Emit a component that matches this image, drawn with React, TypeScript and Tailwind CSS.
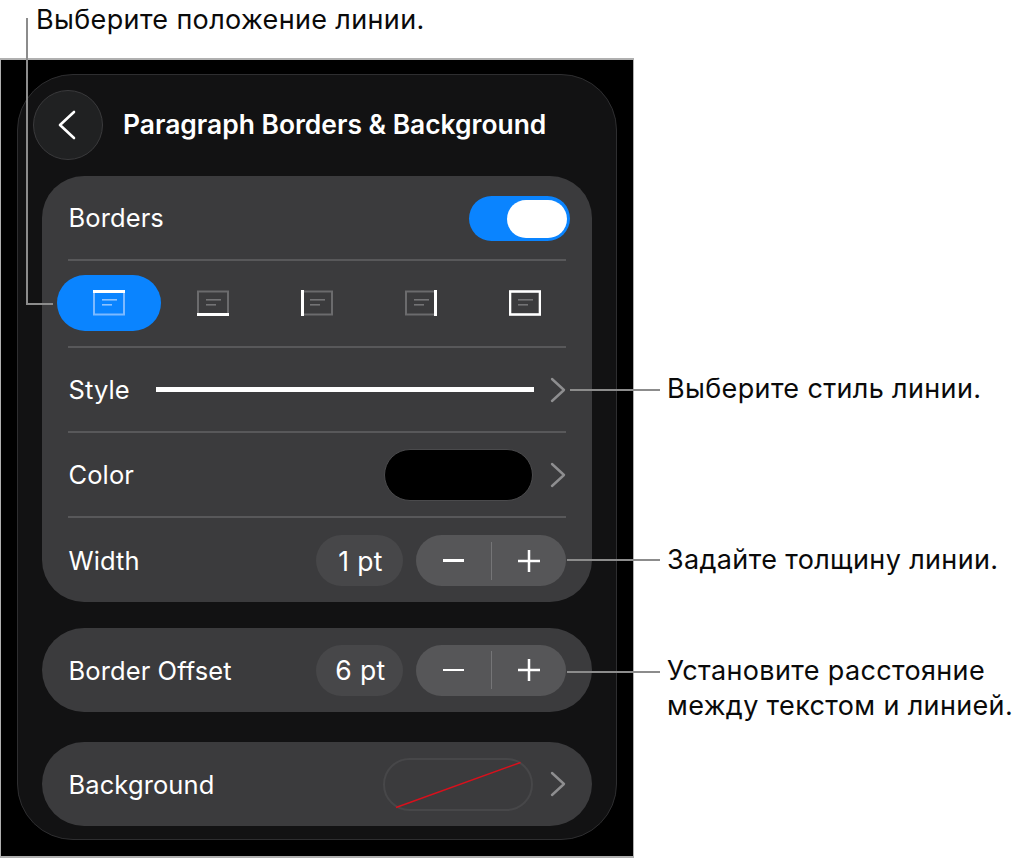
const FONT = "font-['Inter','Noto_Sans',sans-serif]";

function Chevron({ className = "" }: { className?: string }) {
  return (
    <svg width="16" height="26" viewBox="0 0 16 26" fill="none" className={className}>
      <path d="M2 2 L14 13 L2 24" stroke="#8e8e90" strokeWidth="2.4" strokeLinecap="round" strokeLinejoin="round" />
    </svg>
  );
}

function BorderIcon({ side, selected = false }: { side: "top" | "bottom" | "left" | "right" | "all"; selected?: boolean }) {
  const base = selected ? "#7cb9ff" : "#6b6b6d";
  const w = "#ffffff";
  const text = selected ? "#8cc2ff" : "#737375";
  return (
    <svg width="32" height="26" viewBox="0 0 32 26" fill="none">
      <rect x="1" y="1.5" width="30" height="23" stroke={side === "all" ? w : base} strokeWidth={side === "all" ? 2.6 : 2} />
      {side === "top" && <rect x="0" y="0" width="32" height="3" fill={w} />}
      {side === "bottom" && <rect x="0" y="23" width="32" height="3" fill={w} />}
      {side === "left" && <rect x="0" y="0" width="3" height="26" fill={w} />}
      {side === "right" && <rect x="29" y="0" width="3" height="26" fill={w} />}
      <rect x="9" y="9" width="15" height="1.6" fill={text} />
      <rect x="9" y="14" width="10" height="1.6" fill={text} />
    </svg>
  );
}

function Stepper() {
  return (
    <div className="flex h-[51px] w-[150px] items-center rounded-full bg-[#565658]">
      <div className="flex flex-1 items-center justify-center">
        <div className="h-[2.5px] w-[21px] bg-white" />
      </div>
      <div className="h-[38px] w-px bg-[#757577]" />
      <div className="flex flex-1 items-center justify-center">
        <svg width="22" height="22" viewBox="0 0 22 22">
          <path d="M0 11 H22 M11 0 V22" stroke="#fff" strokeWidth="2.5" />
        </svg>
      </div>
    </div>
  );
}

function Value({ children }: { children: string }) {
  return (
    <div className="flex h-[51px] w-[87px] items-center justify-center rounded-full bg-[#474749] pt-[2px] pl-[2px] text-[26.5px] tracking-[0.4px] text-white">
      {children}
    </div>
  );
}

function Sep() {
  return <div className="ml-[26px] mr-[26px] h-[2px] bg-[#58585a]" />;
}

function Label({ children, className = "" }: { children: string; className?: string }) {
  return <span className={`ml-[-0.5px] pt-[2px] tracking-[0.1px] ${className}`}>{children}</span>;
}

function Callout({ className, children }: { className: string; children: React.ReactNode }) {
  return <div className={`absolute text-[27px] tracking-[0.35px] text-[#0a0a0a] ${className}`}>{children}</div>;
}

function Leader({ className }: { className: string }) {
  return <div className={`absolute bg-[#8c8c8c] ${className}`} />;
}

export default function App() {
  return (
    <div className={`relative h-[860px] w-[1028px] overflow-hidden bg-white pt-[58px] ${FONT}`}>
      <div className="h-[800px] w-[634px] border-2 border-x-[1px] border-[#b0b0b0] bg-black pt-[14px] pl-[16px]">
        <div className="h-[766px] w-[600px] rounded-[56px] border border-[#2e2e30] bg-[#121213] pl-[24px]">
          <div className="flex h-[101px] items-center pb-[2px]">
            <div className="ml-[-9px] flex h-[70px] w-[70px] items-center justify-center rounded-full border border-[#3a3a3c] bg-[#202122]">
              <svg width="20" height="30" viewBox="0 0 20 30" fill="none" className="mr-[3px]">
                <path d="M17 2 L3 15 L17 28" stroke="#fff" strokeWidth="2.6" strokeLinecap="round" strokeLinejoin="round" />
              </svg>
            </div>
            <div className="ml-[20px] text-[26.4px] font-semibold text-white">Paragraph Borders &amp; Background</div>
          </div>

          <div className="h-[426px] w-[550px] rounded-[42px] bg-[#3b3b3d] text-[25.5px] text-white">
            <div className="flex h-[83px] items-center justify-between pl-[27px] pr-[22px]">
              <Label>Borders</Label>
              <div className="mt-[2px] flex h-[45px] w-[101px] items-center justify-end rounded-full bg-[#0a84ff] pr-[3px]">
                <div className="h-[38px] w-[60px] rounded-full bg-white" />
              </div>
            </div>
            <Sep />
            <div className="flex h-[85px] items-center pl-[15px] pb-[1px]">
              <div className="flex h-[56px] w-[104px] items-center justify-center rounded-full bg-[#0a84ff]">
                <BorderIcon side="top" selected />
              </div>
              <div className="flex w-[104px] justify-center"><BorderIcon side="bottom" /></div>
              <div className="flex w-[104px] justify-center"><BorderIcon side="left" /></div>
              <div className="flex w-[104px] justify-center"><BorderIcon side="right" /></div>
              <div className="flex w-[104px] justify-center"><BorderIcon side="all" /></div>
            </div>
            <Sep />
            <div className="flex h-[83px] items-center pl-[27px] pr-[26px]">
              <Label className="w-[87.5px]">Style</Label>
              <div className="h-[5px] w-[378px] bg-white" />
              <Chevron className="ml-auto" />
            </div>
            <Sep />
            <div className="flex h-[83px] items-center pl-[27px] pr-[26px]">
              <Label>Color</Label>
              <div className="ml-auto mr-[17px] h-[52px] w-[149px] rounded-full border border-[#4a4a4c] bg-black" />
              <Chevron />
            </div>
            <Sep />
            <div className="flex h-[85px] items-center pl-[27px] pr-[26px]">
              <Label>Width</Label>
              <div className="ml-auto mr-[13px]"><Value>1 pt</Value></div>
              <Stepper />
            </div>
          </div>

          <div className="mt-[26px] flex h-[84px] w-[550px] items-center rounded-[42px] bg-[#3b3b3d] pl-[27px] pr-[26px] text-[25.5px] text-white">
            <Label>Border Offset</Label>
            <div className="ml-auto mr-[13px]"><Value>6 pt</Value></div>
            <Stepper />
          </div>

          <div className="mt-[30px] flex h-[84px] w-[550px] items-center rounded-[42px] bg-[#3b3b3d] pl-[27px] pr-[26px] text-[25.5px] text-white">
            <Label>Background</Label>
            <div className="relative ml-auto mr-[17px] h-[53px] w-[150px] rounded-full border-2 border-[#474749]">
              <svg width="150" height="53" viewBox="0 0 150 53" className="absolute left-[-2px] top-[-2px]">
                <line x1="13" y1="49.5" x2="137.5" y2="4.5" stroke="#d8101c" strokeWidth="1.5" />
              </svg>
            </div>
            <Chevron />
          </div>
        </div>
      </div>

      <Leader className="left-[26px] top-[18px] h-[287px] w-[2px]" />
      <Leader className="left-[26px] top-[303px] h-[2px] w-[27px]" />
      <Leader className="left-[570px] top-[389px] h-[2px] w-[90px]" />
      <Leader className="left-[567px] top-[559px] h-[2px] w-[93px]" />
      <Leader className="left-[567px] top-[671px] h-[2px] w-[93px]" />

      <Callout className="left-[36px] top-[1px] leading-[37px]">Выберите положение линии.</Callout>
      <Callout className="left-[667px] top-[370px] leading-[37px]">Выберите стиль линии.</Callout>
      <Callout className="left-[667px] top-[541px] leading-[37px]">Задайте толщину линии.</Callout>
      <Callout className="left-[667px] top-[653px] leading-[35px]">
        Установите расстояние
        <br />
        между текстом и линией.
      </Callout>
    </div>
  );
}
